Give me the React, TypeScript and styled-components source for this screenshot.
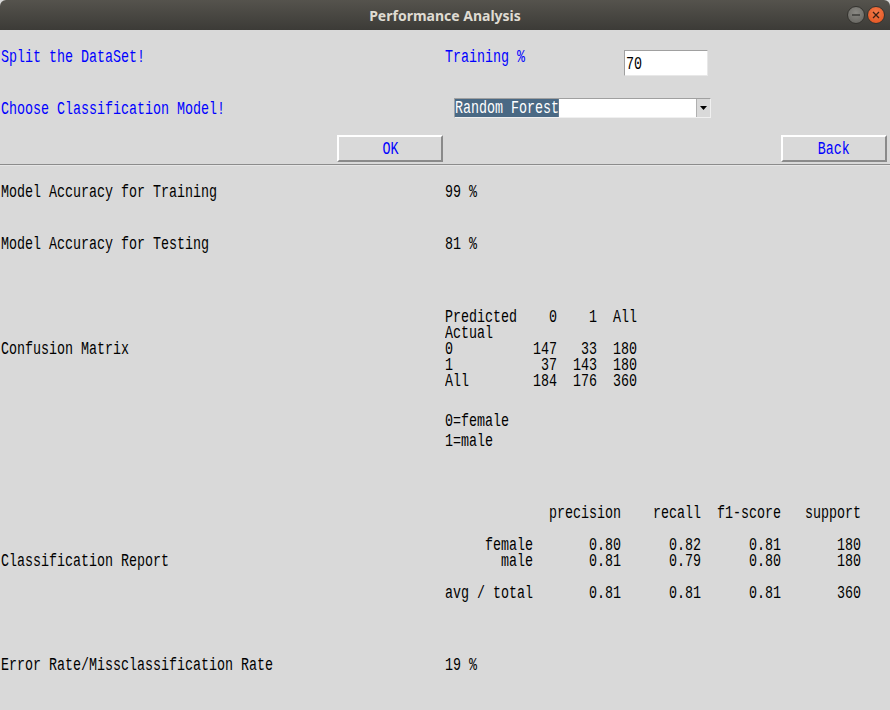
import React from "react"
import styled, { createGlobalStyle } from "styled-components"

const GlobalStyle = createGlobalStyle`
  html, body {
    margin: 0;
    padding: 0;
    background: #d9d9d9;
  }
  #root {
    width: 890px;
    height: 710px;
    overflow: hidden;
  }
`

const Window = styled.div`
  width: 890px;
  height: 710px;
  background: #d9d9d9;
  display: flex;
  flex-direction: column;
`

const TitleBar = styled.div`
  height: 30px;
  flex: none;
  display: flex;
  align-items: center;
  justify-content: center;
  position: relative;
  background: linear-gradient(#55534d, #3c3b37);
  border-radius: 6px 6px 0 0;
`

const TitleText = styled.div`
  font-family: "Noto Sans", "DejaVu Sans", sans-serif;
  font-weight: 700;
  font-size: 14px;
  color: #dfdbd2;
`

const WinButtons = styled.div`
  position: absolute;
  right: 5px;
  top: 6px;
  display: flex;
  gap: 2px;
`

const WinButton = styled.div<{ $close?: boolean }>`
  width: 18px;
  height: 18px;
  border-radius: 50%;
  display: flex;
  align-items: center;
  justify-content: center;
  background: ${(p) =>
    p.$close
      ? "radial-gradient(circle at 50% 35%, #f47a4a, #e0501c)"
      : "radial-gradient(circle at 50% 35%, #8a8984, #62615c)"};
  border: 1px solid #34332f;
  box-sizing: border-box;
`

// Tk-ish condensed monospace: stretched font squeezed to an 8px advance
const Mono = styled.span<{ $color?: string; $center?: boolean }>`
  display: inline-block;
  white-space: pre;
  font-family: "Liberation Mono", "DejaVu Sans Mono", monospace;
  font-size: 19px;
  line-height: 20px;
  color: ${(p) => p.$color || "#000"};
  transform: scaleX(0.7018);
  transform-origin: ${(p) => (p.$center ? "center" : "left")} center;
`

const Pre = styled(Mono)<{ $lines: number }>`
  line-height: 16px;
  height: ${(p) => p.$lines * 16}px;
`

const Row = styled.div<{ $top?: number; $h?: number }>`
  display: flex;
  align-items: flex-start;
  padding-top: ${(p) => p.$top || 0}px;
  height: ${(p) => p.$h || 0}px;
  box-sizing: border-box;
  flex: none;
`

const LeftCell = styled.div<{ $end?: boolean }>`
  width: 445px;
  flex: none;
  padding-left: 1px;
  box-sizing: border-box;
  display: flex;
  justify-content: ${(p) => (p.$end ? "flex-end" : "flex-start")};
  padding-right: ${(p) => (p.$end ? 2 : 0)}px;
`

const MidCell = styled.div`
  width: 179px;
  flex: none;
`

const RightCell = styled.div<{ $end?: boolean; $pl?: number; $pt?: number }>`
  flex: 1;
  display: flex;
  justify-content: ${(p) => (p.$end ? "flex-end" : "flex-start")};
  padding-right: ${(p) => (p.$end ? 3 : 0)}px;
  padding-left: ${(p) => p.$pl || 0}px;
  margin-top: ${(p) => p.$pt || 0}px;
`

const Entry = styled.div`
  margin-top: 3px;
  width: 84px;
  height: 26px;
  box-sizing: border-box;
  background: #fff;
  border: 1px solid #e8e8e8;
  border-top-color: #a0a0a0;
  border-left-color: #a0a0a0;
  padding: 3px 1px 1px;
`

const Combo = styled.div`
  width: 257px;
  height: 20px;
  box-sizing: border-box;
  background: #fff;
  border: 1px solid #f0f0f0;
  border-top-color: #a0a0a0;
  border-left-color: #a0a0a0;
  display: flex;
  align-items: stretch;
`

const ComboText = styled.div`
  flex: 1;
`

const Selected = styled(Mono)`
  background: #4a6984;
  line-height: 18px;
`

const ComboArrow = styled.div`
  width: 13px;
  flex: none;
  background: #d9d9d9;
  border-left: 1px solid #b0b0b0;
  display: flex;
  align-items: center;
  justify-content: center;
`

const Button = styled.div`
  width: 106px;
  height: 27px;
  box-sizing: border-box;
  border: 2px solid #8a8a8a;
  border-top-color: #fff;
  border-left-color: #fff;
  background: #d9d9d9;
  display: flex;
  align-items: center;
  justify-content: center;
  padding-top: 1px;
`

const Separator = styled.div`
  height: 1px;
  background: #8c8c8c;
  border-bottom: 1px solid #e6e6e6;
  flex: none;
`

const Result = styled.div<{ $gap: number }>`
  display: flex;
  align-items: center;
  margin-top: ${(p) => p.$gap}px;
  flex: none;
`

const Note = styled.div<{ $gap?: number }>`
  margin-top: ${(p) => p.$gap || 0}px;
  padding-left: 445px;
  height: 20px;
  flex: none;
`

const matrix = `Predicted    0    1  All
Actual
0          147   33  180
1           37  143  180
All        184  176  360`

const report = `             precision    recall  f1-score   support

     female       0.80      0.82      0.81       180
       male       0.81      0.79      0.80       180

avg / total       0.81      0.81      0.81       360`

export default function App() {
  return (
    <Window>
      <GlobalStyle />
      <TitleBar>
        <TitleText>Performance Analysis</TitleText>
        <WinButtons>
          <WinButton>
            <svg width="8" height="8" viewBox="0 0 8 8">
              <rect x="0" y="3.3" width="8" height="1.4" fill="#3a3a37" />
            </svg>
          </WinButton>
          <WinButton $close>
            <svg width="8" height="8" viewBox="0 0 8 8">
              <path d="M1 1 L7 7 M7 1 L1 7" stroke="#3a2015" strokeWidth="1.3" />
            </svg>
          </WinButton>
        </WinButtons>
      </TitleBar>

      <Row $top={17} $h={52}>
        <LeftCell>
          <Mono $color="#0000ff">Split the DataSet!</Mono>
        </LeftCell>
        <MidCell>
          <Mono $color="#0000ff">Training %</Mono>
        </MidCell>
        <Entry>
          <Mono>70</Mono>
        </Entry>
      </Row>

      <Row $top={17} $h={53}>
        <LeftCell>
          <Mono $color="#0000ff">Choose Classification Model!</Mono>
        </LeftCell>
        <RightCell $pl={9} $pt={-1}>
          <Combo>
            <ComboText>
              <Selected $color="#fff">Random Forest</Selected>
            </ComboText>
            <ComboArrow>
              <svg width="7" height="4" viewBox="0 0 7 4">
                <path d="M0 0 H7 L3.5 4 Z" fill="#000" />
              </svg>
            </ComboArrow>
          </Combo>
        </RightCell>
      </Row>

      <Row $h={29}>
        <LeftCell $end>
          <Button>
            <Mono $color="#0000ff" $center>
              OK
            </Mono>
          </Button>
        </LeftCell>
        <RightCell $end>
          <Button>
            <Mono $color="#0000ff" $center>
              Back
            </Mono>
          </Button>
        </RightCell>
      </Row>
      <Separator />

      <Result $gap={16}>
        <LeftCell>
          <Mono>Model Accuracy for Training</Mono>
        </LeftCell>
        <Mono>99 %</Mono>
      </Result>

      <Result $gap={32}>
        <LeftCell>
          <Mono>Model Accuracy for Testing</Mono>
        </LeftCell>
        <Mono>81 %</Mono>
      </Result>

      <Result $gap={55}>
        <LeftCell>
          <Mono>Confusion Matrix</Mono>
        </LeftCell>
        <Pre $lines={5}>{matrix}</Pre>
      </Result>
      <Note $gap={22}>
        <Mono>0=female</Mono>
      </Note>
      <Note>
        <Mono>1=male</Mono>
      </Note>

      <Result $gap={54}>
        <LeftCell>
          <Mono>Classification Report</Mono>
        </LeftCell>
        <Pre $lines={7}>{report}</Pre>
      </Result>

      <Result $gap={38}>
        <LeftCell>
          <Mono>Error Rate/Missclassification Rate</Mono>
        </LeftCell>
        <Mono>19 %</Mono>
      </Result>
    </Window>
  )
}
